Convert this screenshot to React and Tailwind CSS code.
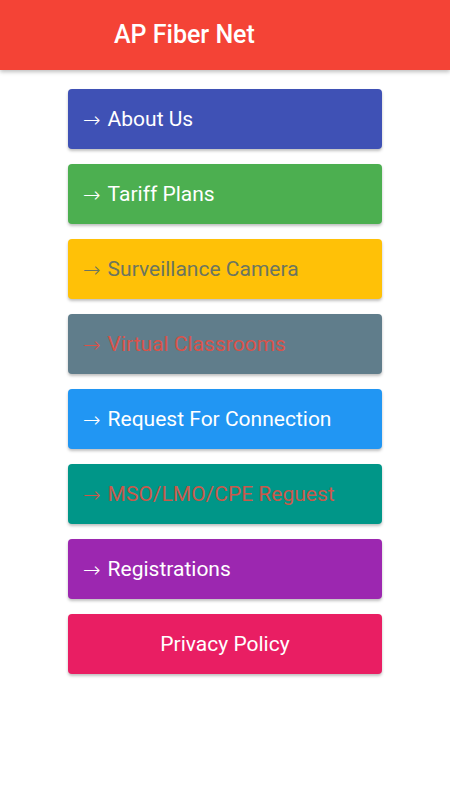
import React from 'react';

const items = [
  { label: 'About Us', bg: 'bg-[#3F51B5]', text: 'text-white' },
  { label: 'Tariff Plans', bg: 'bg-[#4CAF50]', text: 'text-white' },
  { label: 'Surveillance Camera', bg: 'bg-[#FFC107]', text: 'text-[#6b7560]' },
  { label: 'Virtual Classrooms', bg: 'bg-[#607D8B]', text: 'text-[#d9534a]' },
  { label: 'Request For Connection', bg: 'bg-[#2196F3]', text: 'text-white' },
  { label: 'MSO/LMO/CPE Reguest', bg: 'bg-[#009688]', text: 'text-[#c9594b]' },
  { label: 'Registrations', bg: 'bg-[#9C27B0]', text: 'text-white' },
];

export default function App() {
  return (
    <div className="min-h-[800px] bg-white font-['Roboto',sans-serif]">
      {/* Toolbar */}
      <div className="h-[70px] bg-[#F44336] flex items-center pl-[114px] shadow-[0_2px_4px_rgba(0,0,0,0.25)]">
        <h1 className="text-[25px] font-medium text-white">AP Fiber Net</h1>
      </div>

      <div className="flex flex-col items-center gap-[15px] pt-[19px]">
        {items.map((item) => (
          <button
            key={item.label}
            className={`w-[314px] h-[60px] rounded-[4px] ${item.bg} ${item.text} text-[21px] text-left pl-[15px] pt-[2px] flex items-center shadow-[0_2px_3px_rgba(0,0,0,0.25)]`}
          >
            <span className="font-['DejaVu_Sans',sans-serif] font-light text-[21px] leading-none">→</span>
            <span className="ml-[7px]">{item.label}</span>
          </button>
        ))}
        <button className="w-[314px] h-[60px] rounded-[4px] bg-[#E91E63] text-white text-[21px] pt-[2px] shadow-[0_2px_3px_rgba(0,0,0,0.25)]">
          Privacy Policy
        </button>
      </div>
    </div>
  );
}
